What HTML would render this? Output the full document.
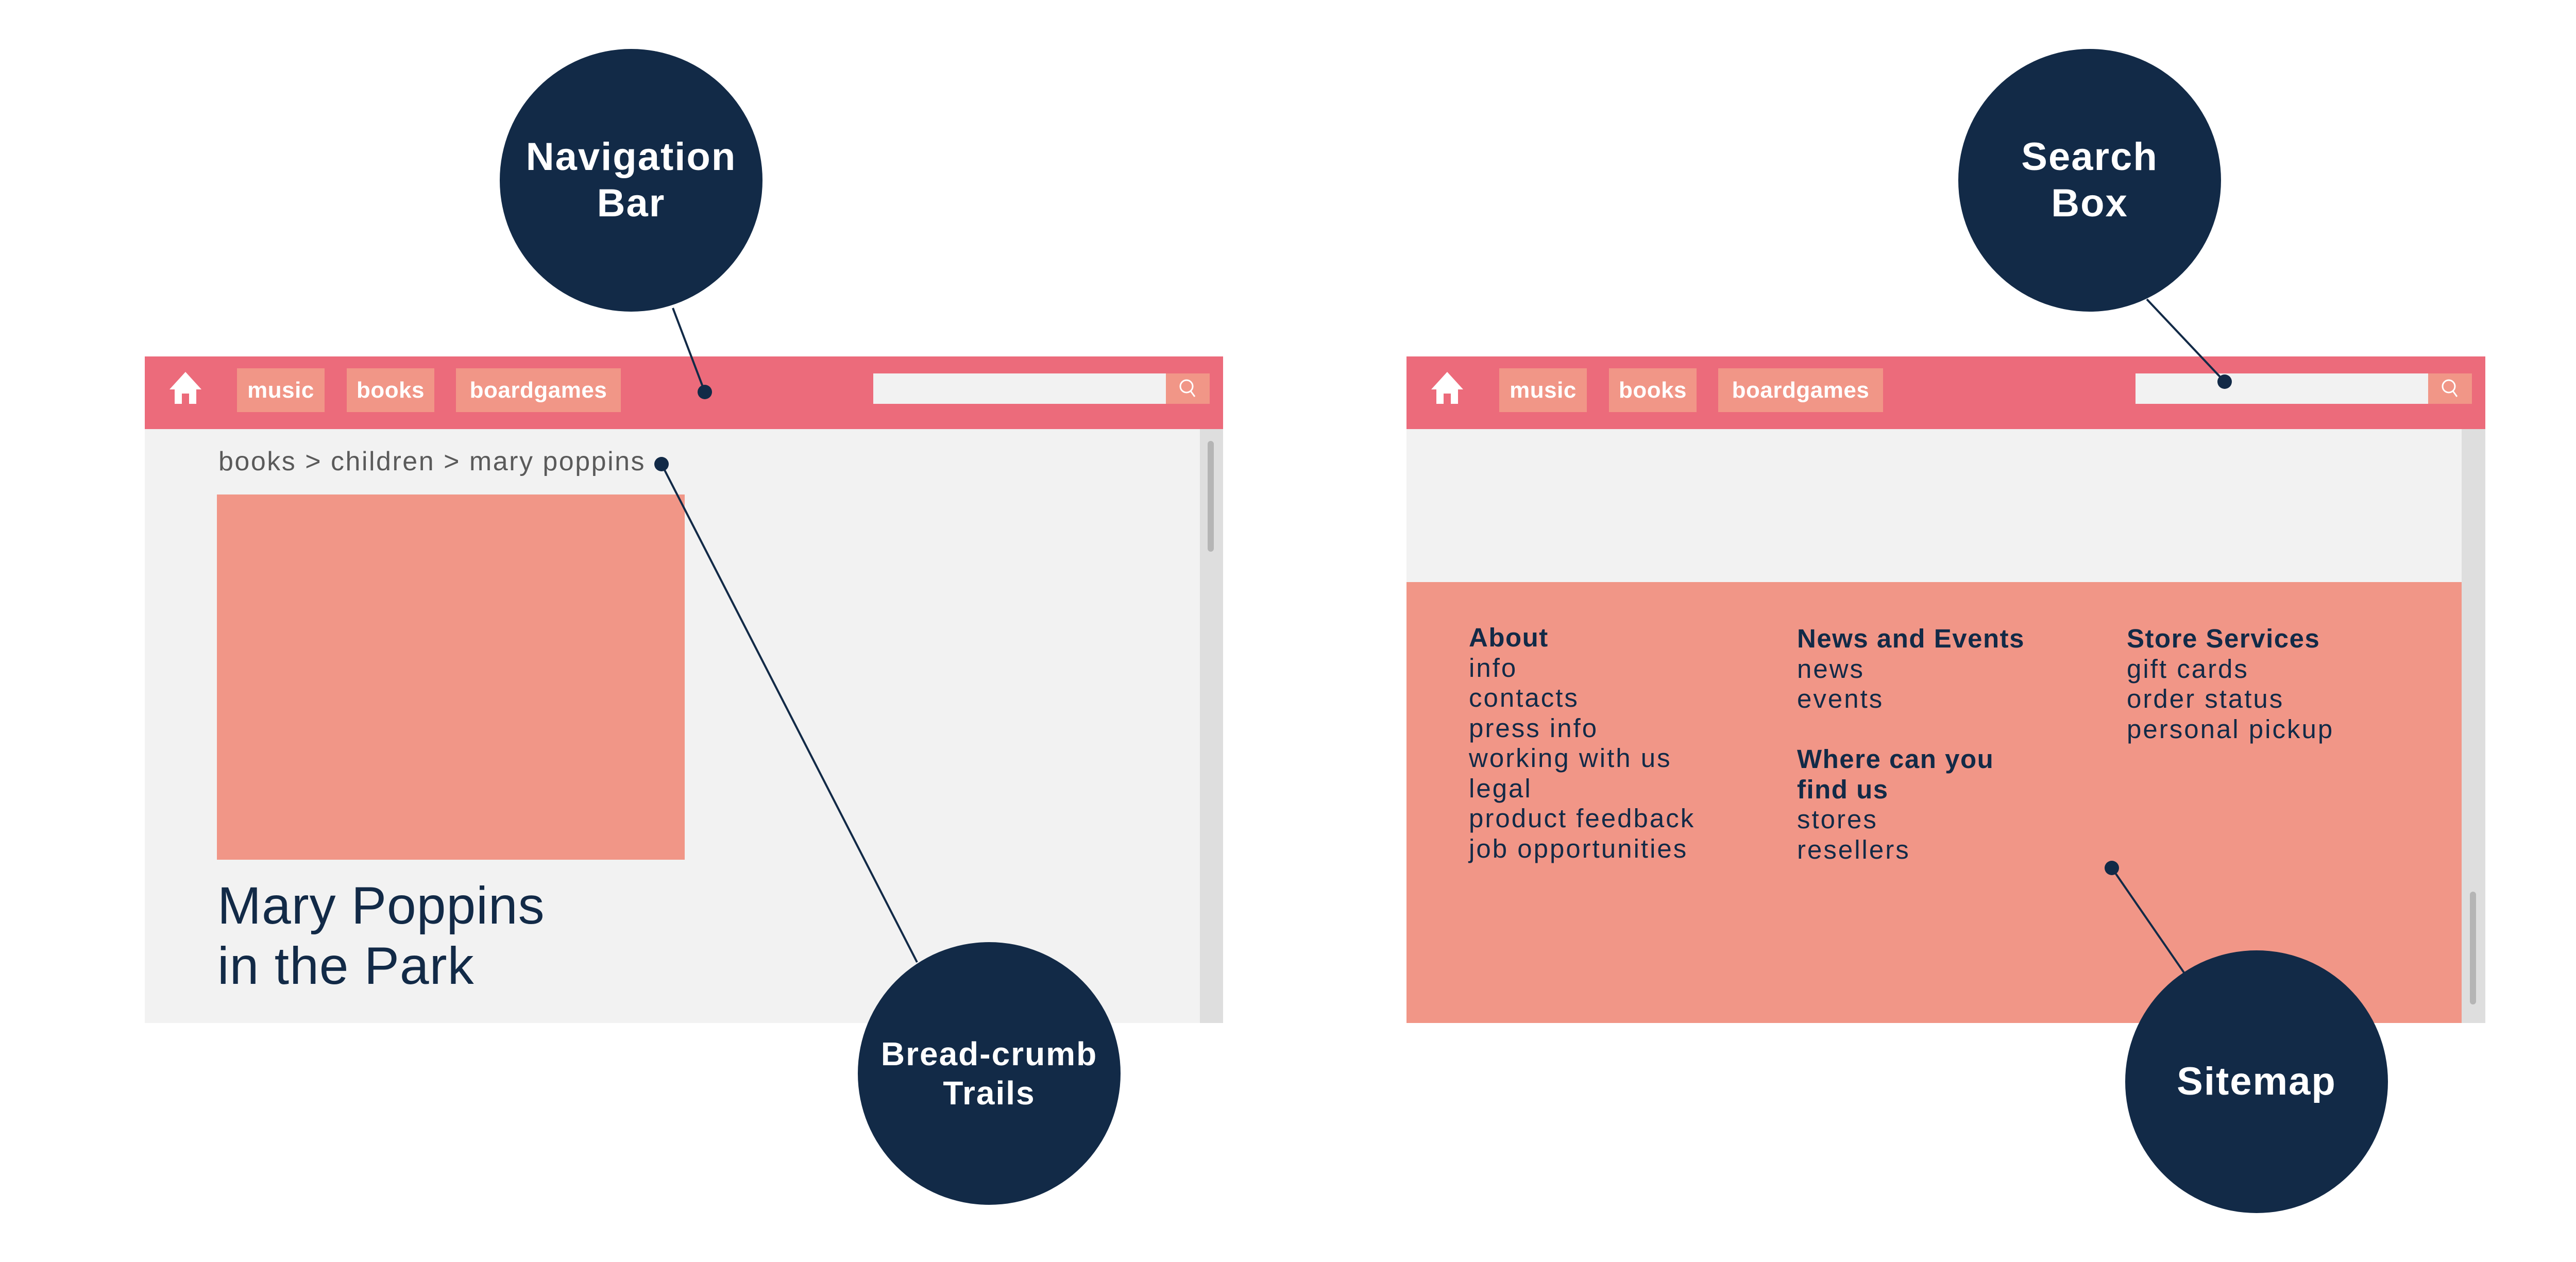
<!DOCTYPE html>
<html><head><meta charset="utf-8"><style>
*{margin:0;padding:0;box-sizing:border-box}
body{width:5121px;height:2450px;background:#fff;position:relative;overflow:hidden;font-family:"Liberation Sans",sans-serif}
.a{position:absolute}
.nav{background:#ec6b7b}
.btn{background:#f19687;color:#fff;font-size:44px;font-weight:bold;display:flex;align-items:center;justify-content:center;letter-spacing:0.5px}
.circ{background:#122a47;border-radius:50%;color:#fff;display:flex;align-items:center;justify-content:center;text-align:center;font-size:76px;font-weight:bold;line-height:90px;letter-spacing:2px}
.sm{color:#122a47;font-size:51px;line-height:58.5px;letter-spacing:3px;white-space:nowrap}
.sm b{display:block;letter-spacing:1.5px}
</style></head><body>

<!-- LEFT FRAME -->
<div class="a" style="left:281px;top:833px;width:2093px;height:1153px;background:#f2f2f2"></div>
<div class="a" style="left:2329px;top:833px;width:45px;height:1153px;background:#dedede"></div>
<div class="a" style="left:2344px;top:856px;width:12px;height:215px;background:#b5b5b5;border-radius:6px"></div>
<div class="a nav" style="left:281px;top:692px;width:2093px;height:141px"></div>
<svg class="a" style="left:325px;top:718px" width="70" height="70" viewBox="0 0 70 70"><path d="M35 4 L4 38 H14 V66 H28 V46 H42 V66 H56 V38 H66 Z" fill="#fff"/></svg>
<div class="a btn" style="left:460px;top:715px;width:170px;height:85px">music</div>
<div class="a btn" style="left:673px;top:715px;width:170px;height:85px">books</div>
<div class="a btn" style="left:885px;top:715px;width:320px;height:85px">boardgames</div>
<div class="a" style="left:1695px;top:725px;width:568px;height:59px;background:#f2f2f2"></div>
<div class="a" style="left:2263px;top:725px;width:85px;height:59px;background:#f19687"></div>
<svg class="a" style="left:2283px;top:730px" width="45" height="50" viewBox="0 0 45 50"><circle cx="20" cy="20" r="12" fill="none" stroke="#fff" stroke-width="3"/><path d="M28 29 L36 40" stroke="#fff" stroke-width="3"/></svg>
<div class="a" style="left:424px;top:866px;font-size:52px;letter-spacing:2.5px;color:#5a5a5a;white-space:nowrap">books &gt; children &gt; mary poppins</div>
<div class="a" style="left:421px;top:960px;width:908px;height:709px;background:#f19687"></div>
<div class="a" style="left:422px;top:1700px;font-size:102px;line-height:117px;color:#122a47;letter-spacing:1px">Mary Poppins<br>in the Park</div>

<!-- RIGHT FRAME -->
<div class="a" style="left:2730px;top:833px;width:2094px;height:1153px;background:#f2f2f2"></div>
<div class="a" style="left:2730px;top:1130px;width:2048px;height:856px;background:#f19687"></div>
<div class="a" style="left:4778px;top:833px;width:46px;height:1153px;background:#dedede"></div>
<div class="a" style="left:4794px;top:1731px;width:12px;height:219px;background:#b5b5b5;border-radius:6px"></div>
<div class="a nav" style="left:2730px;top:692px;width:2094px;height:141px"></div>
<svg class="a" style="left:2774px;top:718px" width="70" height="70" viewBox="0 0 70 70"><path d="M35 4 L4 38 H14 V66 H28 V46 H42 V66 H56 V38 H66 Z" fill="#fff"/></svg>
<div class="a btn" style="left:2910px;top:715px;width:170px;height:85px">music</div>
<div class="a btn" style="left:3123px;top:715px;width:170px;height:85px">books</div>
<div class="a btn" style="left:3335px;top:715px;width:320px;height:85px">boardgames</div>
<div class="a" style="left:4145px;top:725px;width:568px;height:59px;background:#f2f2f2"></div>
<div class="a" style="left:4713px;top:725px;width:85px;height:59px;background:#f19687"></div>
<svg class="a" style="left:4733px;top:730px" width="45" height="50" viewBox="0 0 45 50"><circle cx="20" cy="20" r="12" fill="none" stroke="#fff" stroke-width="3"/><path d="M28 29 L36 40" stroke="#fff" stroke-width="3"/></svg>

<div class="a sm" style="left:2851px;top:1209px"><b>About</b>info<br>contacts<br>press info<br>working with us<br>legal<br>product feedback<br>job opportunities</div>
<div class="a sm" style="left:3488px;top:1211px"><b>News and Events</b>news<br>events<br><br><b>Where can you<br>find us</b>stores<br>resellers</div>
<div class="a sm" style="left:4128px;top:1211px"><b>Store Services</b>gift cards<br>order status<br>personal pickup</div>

<!-- LINES -->
<svg class="a" style="left:0;top:0" width="5121" height="2450">
<g stroke="#122a47" stroke-width="4">
<line x1="1306" y1="598" x2="1368" y2="761"/>
<line x1="1284" y1="901" x2="1780" y2="1868"/>
<line x1="4167" y1="581" x2="4318" y2="741"/>
<line x1="4099" y1="1685" x2="4239" y2="1888"/>
</g>
<g fill="#122a47">
<circle cx="1368" cy="761" r="14"/><circle cx="1284" cy="901" r="14"/>
<circle cx="4318" cy="741" r="14"/><circle cx="4099" cy="1685" r="14"/>
</g>
</svg>

<!-- CIRCLES -->
<div class="a circ" style="left:970px;top:95px;width:510px;height:510px">Navigation<br>Bar</div>
<div class="a circ" style="left:1665px;top:1829px;width:510px;height:510px;font-size:64px;line-height:76px">Bread-crumb<br>Trails</div>
<div class="a circ" style="left:3801px;top:95px;width:510px;height:510px">Search<br>Box</div>
<div class="a circ" style="left:4125px;top:1845px;width:510px;height:510px">Sitemap</div>
</body></html>
